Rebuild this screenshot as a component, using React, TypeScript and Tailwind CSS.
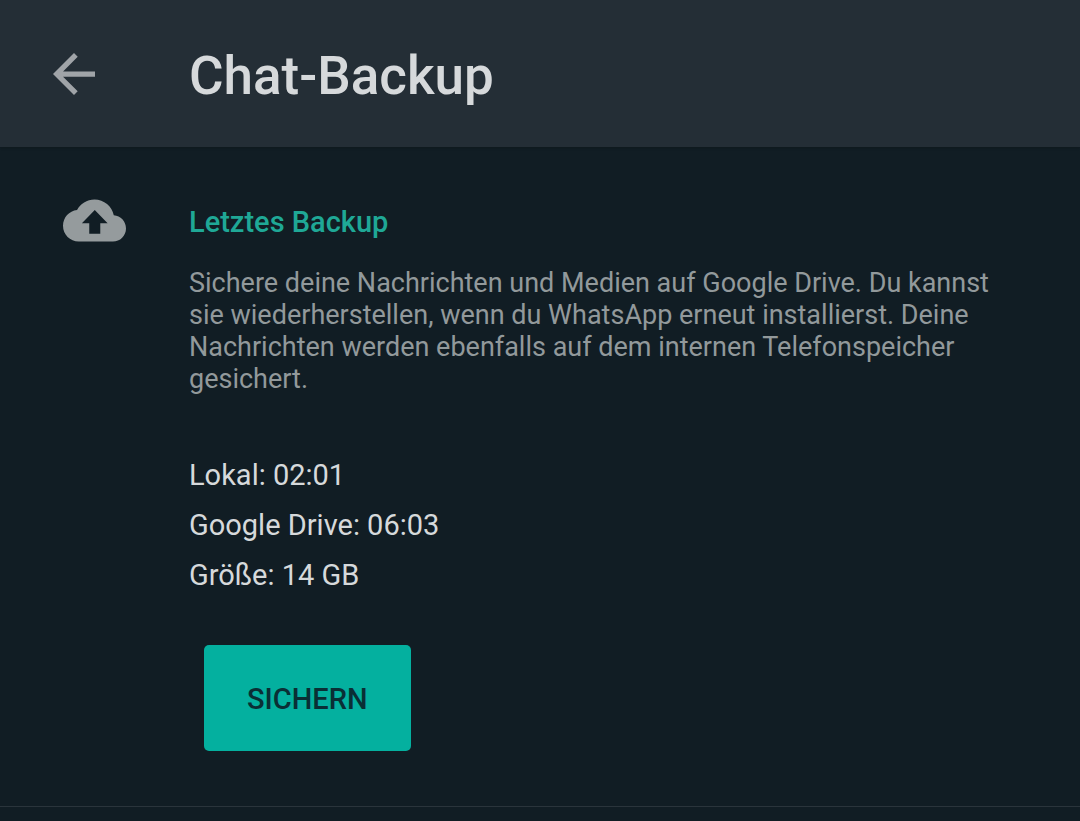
const details = ["Lokal: 02:01", "Google Drive: 06:03", "Größe: 14 GB"];

function BackIcon() {
  return (
    <svg viewBox="4 4 16 16" className="size-[42px]" fill="currentColor" aria-hidden="true">
      <path d="M20 11H7.83l5.59-5.59L12 4l-8 8 8 8 1.41-1.41L7.83 13H20v-2z" />
    </svg>
  );
}

function CloudUploadIcon() {
  return (
    <svg viewBox="0 0 24 24" className="size-[63px]" fill="currentColor" aria-hidden="true">
      <path d="M19.35 10.04C18.67 6.59 15.64 4 12 4 9.11 4 6.6 5.64 5.35 8.04 2.34 8.36 0 10.91 0 14c0 3.31 2.69 6 6 6h13c2.76 0 5-2.24 5-5 0-2.64-2.05-4.78-4.65-4.96zM14.2 13v4h-4.2v-4H7.2l4.9-5 4.9 5h-2.8z" />
    </svg>
  );
}

export default function App() {
  return (
    <div className="min-h-screen bg-[#111d24] font-['Roboto',sans-serif] text-[#d6d9db]">
      <header className="flex h-[147px] items-center bg-[#242e36] pl-[53px] shadow">
        <button type="button" aria-label="Zurück" className="mr-[94px] text-[#a0a4a8]">
          <BackIcon />
        </button>
        <h1 className="pt-1 text-[53px] leading-[60px] font-medium">Chat-Backup</h1>
      </header>
      <main>
        <section className="flex border-b border-[#2a343b] pt-[42px] pr-20 pb-[55px] pl-[63px]">
          <div className="w-[126px] shrink-0 text-[#959b9d]">
            <CloudUploadIcon />
          </div>
          <div className="flex-1">
            <h2 className="pt-[15px] text-[29px] leading-9 font-medium text-[#1fa896]">
              Letztes Backup
            </h2>
            <p className="mt-[27px] text-[27px] leading-8 text-[#92999b]">
              Sichere deine Nachrichten und Medien auf Google Drive. Du kannst sie wiederherstellen,
              wenn du WhatsApp erneut installierst. Deine Nachrichten werden ebenfalls auf dem
              internen Telefonspeicher gesichert.
            </p>
            <ul className="mt-[55px] text-[29px] leading-[50px]">
              {details.map((line) => (
                <li key={line}>{line}</li>
              ))}
            </ul>
            <button
              type="button"
              className="mt-[45px] ml-[15px] rounded-[5px] bg-[#04b09f] px-[43px] pt-9 pb-[34px] text-[29px] leading-9 font-medium text-[#0a2f35]"
            >
              SICHERN
            </button>
          </div>
        </section>
      </main>
    </div>
  );
}
